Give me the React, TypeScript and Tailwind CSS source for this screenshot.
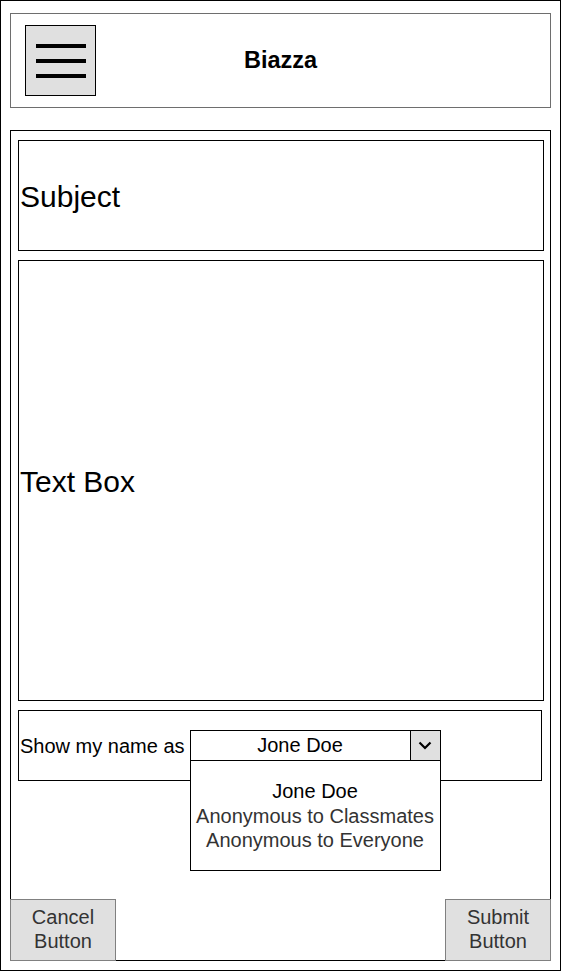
import React, { useState } from 'react';

const sans = { fontFamily: '"Liberation Sans", Arial, sans-serif' };

const options = ['Jone Doe', 'Anonymous to Classmates', 'Anonymous to Everyone'];

const App: React.FC = () => {
  const [name, setName] = useState('Jone Doe');
  const [open, setOpen] = useState(true);

  return (
    <div style={sans} className="w-[561px] h-[971px] border border-black bg-white flex flex-col pt-[12px] pb-[9px] px-[9px] text-black">
      {/* header */}
      <div className="h-[95px] shrink-0 border border-[#6e6e6e] flex items-center relative">
        <button className="ml-[14px] w-[71px] h-[71px] bg-[#e0e0e0] border border-black flex flex-col items-center justify-center gap-[11px]">
          <span className="block w-[50px] h-[4px] bg-black" />
          <span className="block w-[50px] h-[4px] bg-black" />
          <span className="block w-[50px] h-[4px] bg-black" />
        </button>
        <h1 className="absolute left-0 right-0 text-center text-[23.5px] font-bold pointer-events-none">Biazza</h1>
      </div>

      {/* main panel */}
      <div className="mt-[22px] flex-1 border border-black flex flex-col relative">
        <div className="mt-[9px] ml-[7px] mr-[6px] h-[111px] border border-black flex items-center">
          <span className="ml-[1px] mt-[2px] text-[30px]">Subject</span>
        </div>
        <div className="mt-[9px] ml-[7px] mr-[6px] h-[441px] border border-black flex items-center">
          <span className="ml-[1px] mt-[2px] text-[30px]">Text Box</span>
        </div>
        <div className="mt-[9px] ml-[7px] mr-[8px] h-[71px] border border-black flex items-center">
          <span className="ml-[1px] text-[20px]">Show my name as</span>
          <div className="relative ml-[5px]">
            <div className="w-[251px] h-[31px] border border-black bg-white flex">
              <span className="flex-1 text-center text-[20px] leading-[29px]">{name}</span>
              <button
                onClick={() => setOpen(!open)}
                className="w-[30px] border-l border-black bg-[#e0e0e0] flex items-center justify-center"
              >
                <svg width="14" height="9" viewBox="0 0 14 9" fill="none" stroke="black" strokeWidth="2.2">
                  <path d="M1.5 1.5 L7 7 L12.5 1.5" />
                </svg>
              </button>
            </div>
            {open && (
              <div className="absolute left-0 top-[30px] w-[251px] h-[111px] border border-black bg-white z-10 pt-[18px] text-center text-[20px] leading-[24.5px]">
                {options.map((o, i) => (
                  <div
                    key={o}
                    onClick={() => { setName(o); setOpen(false); }}
                    className={i === 0 ? 'text-black' : 'text-[#333333]'}
                  >
                    {o}
                  </div>
                ))}
              </div>
            )}
          </div>
        </div>

        {/* buttons */}
        <div className="mt-auto -mx-px -mb-px flex justify-between">
          <button className="w-[106px] h-[62px] bg-[#e0e0e0] border border-[#808080] text-[20px] leading-[24px] text-[#333333] pb-[2px]">
            Cancel<br />Button
          </button>
          <button className="w-[106px] h-[62px] bg-[#e0e0e0] border border-[#808080] text-[20px] leading-[24px] text-[#333333] pb-[2px]">
            Submit<br />Button
          </button>
        </div>
      </div>
    </div>
  );
};

export default App;
